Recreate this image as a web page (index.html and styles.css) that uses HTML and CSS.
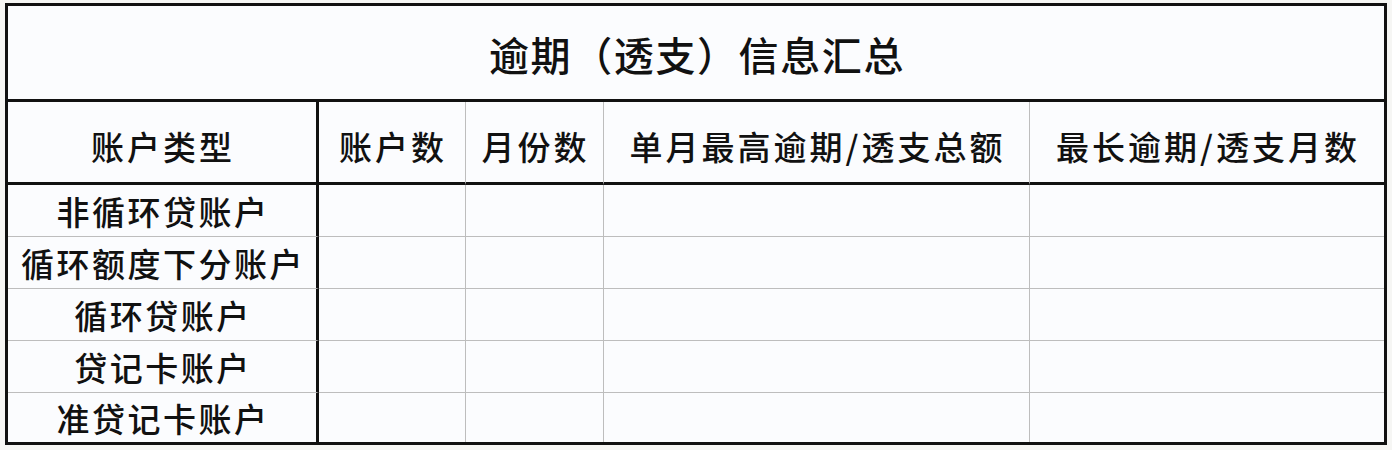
FILE: index.html
```html
<!DOCTYPE html>
<html lang="zh-CN">
<head>
<meta charset="utf-8">
<title>逾期（透支）信息汇总</title>
<link rel="stylesheet" href="styles.css">
</head>
<body>
<div class="sheet">
  <div class="cell title">逾期（透支）信息汇总</div>

  <div class="cell head first">账户类型</div>
  <div class="cell head">账户数</div>
  <div class="cell head">月份数</div>
  <div class="cell head">单月最高逾期/透支总额</div>
  <div class="cell head last">最长逾期/透支月数</div>

  <div class="cell label">非循环贷账户</div>
  <div class="cell"></div><div class="cell"></div><div class="cell"></div><div class="cell last"></div>

  <div class="cell label">循环额度下分账户</div>
  <div class="cell"></div><div class="cell"></div><div class="cell"></div><div class="cell last"></div>

  <div class="cell label">循环贷账户</div>
  <div class="cell"></div><div class="cell"></div><div class="cell"></div><div class="cell last"></div>

  <div class="cell label">贷记卡账户</div>
  <div class="cell"></div><div class="cell"></div><div class="cell"></div><div class="cell last"></div>

  <div class="cell label bottom">准贷记卡账户</div>
  <div class="cell bottom"></div><div class="cell bottom"></div><div class="cell bottom"></div><div class="cell last bottom"></div>
</div>
</body>
</html>
```

FILE: styles.css
```css
* {
  box-sizing: border-box;
}

html, body {
  margin: 0;
  padding: 0;
  background: #f6f6f4;
}

body {
  padding: 3px 0 0 5px;
  font-family: "Noto Sans CJK SC", "Noto Sans", sans-serif;
  color: #111;
}

.sheet {
  display: grid;
  width: 1382px;
  grid-template-columns: 311px 147px 138px 426px 354px;
  grid-template-rows: 96px 83px 52px 52px 52px 52px 49px;
  border: 3px solid #111;
  background: #fbfcfe;
}

.cell {
  display: flex;
  align-items: center;
  justify-content: center;
  border-right: 1px solid #bdbdbd;
  border-bottom: 1px solid #bdbdbd;
  font-size: 33px;
  font-weight: 500;
  letter-spacing: 2.5px;
  padding-left: 2px;
  white-space: nowrap;
}

.cell.last {
  border-right: none;
}

.cell.bottom {
  border-bottom: none;
}

.title {
  grid-column: 1 / -1;
  border-right: none;
  border-bottom: 3px solid #111;
  font-size: 40px;
  letter-spacing: 1.6px;
  padding-top: 2px;
}

.head {
  border-bottom: 3px solid #111;
  padding-top: 8px;
  font-size: 33px;
  letter-spacing: 3px;
}

.head.first,
.label {
  border-right: 3px solid #111;
}
```
